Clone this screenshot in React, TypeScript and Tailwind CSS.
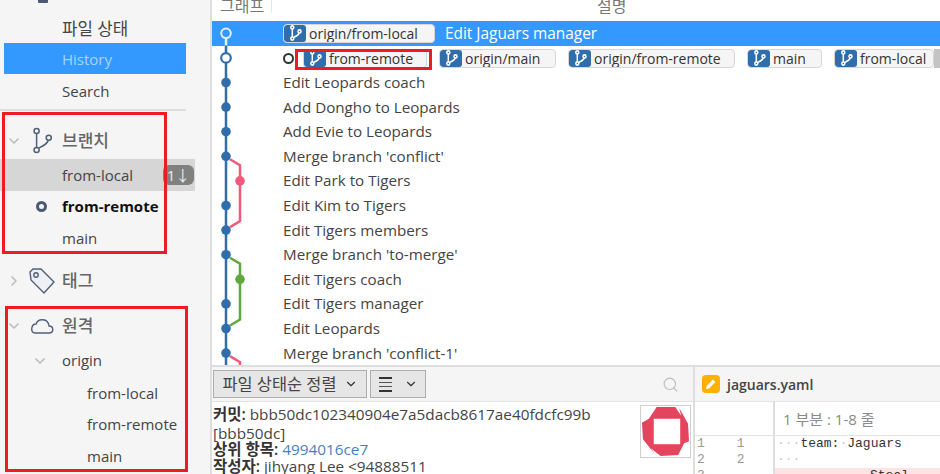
import { ChevronDown, ChevronRight, Search } from "lucide-react";

const FONT = "font-['Open_Sans','Noto_Sans_CJK_KR',sans-serif]";

function BranchGlyph({ className, weight = 1.5 }: { className?: string; weight?: number }) {
  return (
    <svg viewBox="0 0 16 20" fill="none" stroke="currentColor" strokeWidth={weight} className={className}>
      <circle cx="4" cy="3" r="1.9" />
      <circle cx="4" cy="17" r="1.9" />
      <circle cx="13" cy="8" r="1.9" />
      <path d="M4 5v10M5.8 15.5C9 14 12 12.5 12.6 10" />
    </svg>
  );
}

function RefTag({ label, width }: { label: string; width: string }) {
  return (
    <span className={`flex h-[19px] shrink-0 items-stretch overflow-hidden rounded-[4px] border border-[#d6d6d6] bg-[#f5f5f5] ${width}`}>
      <span className="flex w-[22px] shrink-0 items-center justify-center rounded-[3px] bg-[#2f6dab] text-white">
        <BranchGlyph className="h-[16px] w-[13px]" weight={1.9} />
      </span>
      <span className="whitespace-nowrap pl-[3px] text-[14px] leading-[18px] text-[#333]">{label}</span>
    </span>
  );
}

function SideRow({
  label,
  indent = "pl-[62px]",
  extra = "",
  children,
}: {
  label: string;
  indent?: string;
  extra?: string;
  children?: React.ReactNode;
}) {
  return (
    <div className={`relative flex h-[31.7px] items-center whitespace-nowrap text-[15px] text-[#444] ${indent} ${extra}`}>
      {label}
      {children}
    </div>
  );
}

function SectionRow({ label, icon, open, height }: { label: string; icon: React.ReactNode; open: boolean; height: string }) {
  return (
    <div className={`flex items-center ${height}`}>
      <span className="flex w-[28px] justify-center text-[#bdbdbd]">
        {open ? <ChevronDown size={16} strokeWidth={2.5} /> : <ChevronRight size={16} strokeWidth={2.5} />}
      </span>
      <span className="mr-[6px] flex w-[28px] justify-center">{icon}</span>
      <span className="text-[17px] font-medium text-[#666]">{label}</span>
    </div>
  );
}

function Sidebar() {
  return (
    <aside className="relative w-[212px] shrink-0 overflow-hidden border-r-2 border-[#dedede] bg-[#f5f5f5]">
      <div className="h-[12px] overflow-hidden pl-[38px]">
        <div className="h-[3px] w-[10px] rounded-b-[1px] bg-[#4a5a75]" />
      </div>
      <div className="flex h-[31px] items-center pl-[62px] pt-[2px] text-[16.8px] text-[#444]">파일 상태</div>
      <div className="ml-[4px] mr-[24px] flex h-[31px] items-center bg-[#3399ff] pl-[58px] pt-[2px] text-[15px] text-[#a9d2f7]">History</div>
      <div className="flex h-[32px] items-center pl-[62px] pt-[2px] text-[15px] text-[#444]">Search</div>
      <div className="mr-[24px] mt-[3px] h-[2px] bg-[#dedede]" />
      <SectionRow
        label="브랜치"
        open
        height="mt-[14px] h-[34px] pb-[3px]"
        icon={<BranchGlyph className="h-[27px] w-[22px] text-[#4f5f7a]" weight={1.1} />}
      />
      <SideRow label="from-local" extra="mr-[15px] bg-[#d6d6d6]">
        <span className="absolute left-[163px] top-[6px] flex h-[20px] w-[31px] items-center justify-center rounded-[6px] bg-[#808080] text-[15px] text-[#eee]">
          1↓
        </span>
      </SideRow>
      <SideRow label="from-remote" extra="font-bold !text-[#111]">
        <span className="absolute left-[36px] top-[10px] h-[11px] w-[11px] rounded-full border-[3px] border-[#4a5a75]" />
      </SideRow>
      <SideRow label="main" />
      <SectionRow
        label="태그"
        open={false}
        height="mt-[10px] h-[33px]"
        icon={
          <svg viewBox="0 0 28 28" className="h-[28px] w-[28px]" fill="none" stroke="#4f5f7a" strokeWidth="1.4">
            <path d="M2 5l3-3h8l13 13-10 11L3 13z" fill="#eef0f4" />
            <circle cx="8" cy="8" r="2.2" />
          </svg>
        }
      />
      <SectionRow
        label="원격"
        open
        height="mt-[12px] h-[33px]"
        icon={
          <svg viewBox="0 0 24 16" className="h-[16px] w-[24px]" fill="none" stroke="#4f5f7a" strokeWidth="1.4">
            <path d="M5 15h14c5 0 5-7 0-7-1-8-11-8-13-2-5 0-6 9-1 9z" />
          </svg>
        }
      />
      <div className="mt-[2px] flex h-[33px] items-center pl-[32px] text-[15px] text-[#444]">
        <ChevronDown size={16} strokeWidth={2.5} className="text-[#bdbdbd]" />
        <span className="pl-[14px]">origin</span>
      </div>
      <SideRow label="from-local" indent="pl-[87px]" />
      <SideRow label="from-remote" indent="pl-[87px]" />
      <SideRow label="main" indent="pl-[87px]" />
    </aside>
  );
}

const MESSAGES = [
  "Edit Leopards coach",
  "Add Dongho to Leopards",
  "Add Evie to Leopards",
  "Merge branch 'conflict'",
  "Edit Park to Tigers",
  "Edit Kim to Tigers",
  "Edit Tigers members",
  "Merge branch 'to-merge'",
  "Edit Tigers coach",
  "Edit Tigers manager",
  "Edit Leopards",
  "Merge branch 'conflict-1'",
];

const ROW = 24.6;
const MAIN_DOTS = [2, 3, 4, 5, 7, 8, 9, 11, 12, 13];

function Graph() {
  const y = (i: number) => ROW * i + ROW / 2;
  return (
    <svg className="absolute left-0 top-0 h-[346px] w-[70px]" viewBox="0 0 70 346" fill="none">
      <path d={`M14 ${y(0)}V${y(1)}`} stroke="#e3eefa" strokeWidth="2.5" />
      <path d={`M14 ${ROW}V346`} stroke="#2f6dab" strokeWidth="2.5" />
      <path d={`M18 ${y(5) + 3}L28 ${y(5) + 9}V${y(8) - 9}L18 ${y(8) - 3}`} stroke="#f25a7c" strokeWidth="2.5" />
      <path d={`M18 ${y(9) + 3}L28 ${y(9) + 9}V${y(12) - 9}L18 ${y(12) - 3}`} stroke="#5fa83c" strokeWidth="2.5" />
      <path d={`M18 ${y(13) + 3}L28 ${y(13) + 9}V346`} stroke="#f25a7c" strokeWidth="2.5" />
      <circle cx="14" cy={y(0)} r="4.8" fill="#3399ff" stroke="#e3eefa" strokeWidth="2" />
      <circle cx="14" cy={y(1)} r="4.8" fill="#fff" stroke="#2f6dab" strokeWidth="2.2" />
      {MAIN_DOTS.map((i) => (
        <circle key={i} cx="14" cy={y(i)} r="4.8" fill="#2f6dab" />
      ))}
      <circle cx="28" cy={y(6)} r="4.8" fill="#f25a7c" />
      <circle cx="28" cy={y(10)} r="4.8" fill="#5fa83c" />
    </svg>
  );
}

function CommitList() {
  return (
    <div className="h-[365px] overflow-hidden bg-white">
      <div className="flex h-[21px] items-start overflow-hidden text-[16px] leading-[13px] text-[#777]">
        <span className="w-[60px] border-r border-[#e5e5e5] pl-[8px]">그래프</span>
        <span className="ml-[325px]">설명</span>
      </div>
      <div className="relative text-[15.2px] text-[#444]">
        <Graph />
        <div className="flex h-[24.6px] items-center bg-[#3399ff] pl-[71px] text-[15.4px] text-white">
          <RefTag label="origin/from-local" width="w-[152px]" />
          <span className="ml-[10px]">Edit Jaguars manager</span>
        </div>
        <div className="flex h-[24.6px] items-center overflow-hidden pl-[71px] pt-[1px]">
          <span className="mr-[9px] h-[11px] w-[11px] shrink-0 rounded-full border-[2.5px] border-[#333]" />
          <RefTag label="from-remote" width="w-[124px]" />
          <span className="w-[12px] shrink-0" />
          <RefTag label="origin/main" width="w-[117px]" />
          <span className="w-[12px] shrink-0" />
          <RefTag label="origin/from-remote" width="w-[167px]" />
          <span className="w-[12px] shrink-0" />
          <RefTag label="main" width="w-[75px]" />
          <span className="w-[12px] shrink-0" />
          <RefTag label="from-local" width="w-[100px]" />
          <span className="h-[19px] w-[6px] shrink-0 bg-[#c4c4c4]" />
        </div>
        {MESSAGES.map((m) => (
          <div key={m} className="flex h-[24.6px] items-center whitespace-nowrap pl-[71px]">
            {m}
          </div>
        ))}
      </div>
    </div>
  );
}

function Avatar() {
  return (
    <div className="h-[53px] w-[51px] shrink-0 border border-[#cfcfcf] bg-white">
      <svg viewBox="0 0 50 52" className="h-full w-full">
        <path
          d="M16 1L35 1L41 10L39 2L48 18L49 36L44 38L38 50L20 51L10 43L14 49L2 34L1 17L8 13z"
          fill="#e5445e"
        />
        <path d="M13 13h27v26H13z" fill="#fff" />
      </svg>
    </div>
  );
}

function BottomPanel() {
  return (
    <div className="flex h-[109px] border-t-2 border-[#dedede]">
      <div className="w-[483px] shrink-0 overflow-hidden border-r-2 border-[#dedede]">
        <div className="flex h-[35px] items-center gap-[3px] border-b border-[#e2e2e2] bg-[#f5f5f5] pl-[1px] pr-[14px]">
          <div className="flex h-[28px] w-[154px] items-center justify-center gap-[7px] border border-[#adadad] bg-[#e6e6e6] text-[16.4px] text-[#444]">
            파일 상태순 정렬
            <ChevronDown size={14} strokeWidth={2} className="text-[#333]" />
          </div>
          <div className="flex h-[28px] w-[56px] items-center justify-center gap-[12px] border border-[#adadad] bg-[#e6e6e6]">
            <span className="flex w-[13px] flex-col gap-[3px]">
              <span className="h-[2px] bg-[#333]" />
              <span className="h-[1px] bg-[#555]" />
              <span className="h-[1px] bg-[#555]" />
              <span className="h-[2px] bg-[#333]" />
            </span>
            <ChevronDown size={14} strokeWidth={2} className="text-[#333]" />
          </div>
          <Search size={17} strokeWidth={1.5} className="ml-auto text-[#bbb]" />
        </div>
        <div className="flex items-start pl-[1px] pt-[3px]">
          <div className="w-[427px] shrink-0 text-[15.3px] leading-[17px] text-[#444]">
            <div className="mt-[1px] h-[17px] whitespace-nowrap">
              <b className="text-[15.5px] font-semibold text-[#333]">커밋:</b> bbb50dc102340904e7a5dacb8617ae40fdcfc99b
            </div>
            <div className="mt-[2px] h-[16px]">[bbb50dc]</div>
            <div className="h-[17px]">
              <b className="text-[15.5px] font-semibold text-[#333]">상위 항목:</b> <span className="text-[#4a7fb8]">4994016ce7</span>
            </div>
            <div className="h-[17px] whitespace-nowrap">
              <b className="text-[15.5px] font-semibold text-[#333]">작성자:</b> jihyang Lee &lt;94888511
            </div>
          </div>
          <Avatar />
        </div>
      </div>
      <div className="min-w-0 flex-1 overflow-hidden">
        <div className="flex h-[35px] items-center gap-[7px] border-b border-[#e2e2e2] bg-[#f5f5f5] pl-[7px]">
          <span className="flex h-[18px] w-[18px] items-center justify-center rounded-[4px] bg-[#ffb000]">
            <svg viewBox="0 0 12 12" className="h-[12px] w-[12px]" fill="#fff">
              <path d="M1 11l.6-3L8 1.6 10.4 4 4 10.4z" />
            </svg>
          </span>
          <span className="text-[14px] font-semibold text-[#444]">jaguars.yaml</span>
        </div>
        <div className="flex h-[33px]">
          <div className="w-[80px] shrink-0 border-r-2 border-[#dedede]" />
          <div className="flex flex-1 items-center pl-[8px] pt-[2px] text-[15px] text-[#8a8a8a]">1 부분 : 1-8 줄</div>
        </div>
        <div className="border-t border-[#e2e2e2] font-['Liberation_Mono',monospace] text-[13px] leading-[16px]">
          <div className="flex h-[16px]">
            <span className="flex w-[80px] shrink-0 gap-[32px] border-r-2 border-[#dedede] pl-[2px] text-[#999]">
              <span>1</span>
              <span>1</span>
            </span>
            <span className="whitespace-pre pl-[2px] text-[#333]">
              <span className="text-[#ccc]">···</span>team:<span className="text-[#ccc]">·</span>Jaguars
            </span>
          </div>
          <div className="flex h-[16px]">
            <span className="flex w-[80px] shrink-0 gap-[32px] border-r-2 border-[#dedede] pl-[2px] text-[#999]">
              <span>2</span>
              <span>2</span>
            </span>
            <span className="whitespace-pre pl-[2px] text-[#ccc]">···</span>
          </div>
          <div className="flex h-[16px]">
            <span className="w-[80px] shrink-0 border-r-2 border-[#dedede] pl-[2px] text-[#999]">3</span>
            <span className="flex-1 whitespace-pre bg-[#fde3e3] pl-[95px] text-[#333]">Steal</span>
          </div>
        </div>
      </div>
    </div>
  );
}

export default function App() {
  return (
    <div className={`relative flex h-[474px] w-[940px] overflow-hidden bg-white ${FONT}`}>
      <Sidebar />
      <main className="min-w-0 flex-1">
        <CommitList />
        <BottomPanel />
      </main>
      {/* red annotation boxes */}
      <div className="pointer-events-none absolute left-[2px] top-[112px] h-[142px] w-[165px] border-[3px] border-[#ed1c24]" />
      <div className="pointer-events-none absolute left-[5px] top-[306px] h-[166px] w-[183px] border-[3px] border-[#ed1c24]" />
      <div className="pointer-events-none absolute left-[295px] top-[49px] h-[21px] w-[137px] border-[3px] border-[#ed1c24]" />
    </div>
  );
}
